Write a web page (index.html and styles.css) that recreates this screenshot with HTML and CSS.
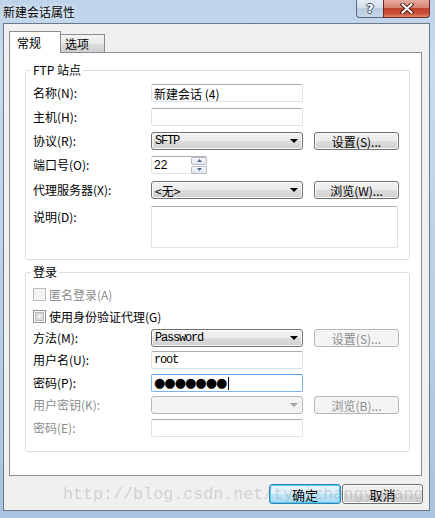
FILE: index.html
```html
<!DOCTYPE html>
<html lang="zh-CN">
  <head>
    <meta charset="utf-8">
    <title>新建会话属性</title>
    <link rel="stylesheet" href="styles.css">
  </head>
  <body>
    <div class="window">
      <div class="titlebar">
        <span class="title">新建会话属性</span>
        <div class="caption-buttons">
          <span class="cap-btn help">?</span>
          <span class="cap-btn close">
            <svg width="14" height="11" viewBox="0 0 14 11">
              <path d="M2.5 1.5 L11.5 9.5 M11.5 1.5 L2.5 9.5" stroke="#4b1f18" stroke-width="4" stroke-linecap="square" />
              <path d="M2.5 1.5 L11.5 9.5 M11.5 1.5 L2.5 9.5" stroke="#fff" stroke-width="2" stroke-linecap="square" />
            </svg>
          </span>
        </div>
      </div>

      <div class="client">
        <div class="tabs">
          <span class="tab active">常规</span>
          <span class="tab">选项</span>
        </div>

        <div class="panel">
          <fieldset class="group ftp">
            <legend>FTP 站点</legend>
            <div class="row">
              <label class="label">名称(N):</label>
              <span class="edit wide">新建会话 (4)</span>
            </div>
            <div class="row">
              <label class="label">主机(H):</label>
              <span class="edit wide"></span>
            </div>
            <div class="row">
              <label class="label">协议(R):</label>
              <span class="combo wide"><span class="mono">SFTP</span><span class="arrow"></span></span>
              <span class="button side">设置(S)...</span>
            </div>
            <div class="row">
              <label class="label">端口号(O):</label>
              <span class="edit port">
                <span class="num">22</span>
                <span class="spin">
                  <span class="spin-btn"><svg width="5" height="3" viewBox="0 0 5 3"><path d="M0 3 L2.5 0 L5 3 Z" fill="#4a6a96" /></svg></span>
                  <span class="spin-btn"><svg width="5" height="3" viewBox="0 0 5 3"><path d="M0 0 L2.5 3 L5 0 Z" fill="#4a6a96" /></svg></span>
                </span>
              </span>
            </div>
            <div class="row push">
              <label class="label">代理服务器(X):</label>
              <span class="combo wide"><span>&lt;无&gt;</span><span class="arrow"></span></span>
              <span class="button side">浏览(W)...</span>
            </div>
            <div class="row tall push">
              <label class="label">说明(D):</label>
              <span class="edit memo"></span>
            </div>
          </fieldset>

          <fieldset class="group login">
            <legend>登录</legend>
            <div class="row check disabled">
              <span class="box"></span>匿名登录(A)
            </div>
            <div class="row check">
              <span class="box"></span>使用身份验证代理(G)
            </div>
            <div class="row">
              <label class="label">方法(M):</label>
              <span class="combo wide"><span class="mono">Password</span><span class="arrow"></span></span>
              <span class="button side disabled">设置(S)...</span>
            </div>
            <div class="row">
              <label class="label">用户名(U):</label>
              <span class="edit wide"><span class="mono">root</span></span>
            </div>
            <div class="row push">
              <label class="label">密码(P):</label>
              <span class="edit wide focus"><span class="dots">●●●●●●●</span><span class="caret"></span></span>
            </div>
            <div class="row disabled">
              <label class="label">用户密钥(K):</label>
              <span class="combo wide disabled"><span></span><span class="arrow"></span></span>
              <span class="button side disabled">浏览(B)...</span>
            </div>
            <div class="row disabled push">
              <label class="label">密码(E):</label>
              <span class="edit wide"></span>
            </div>
          </fieldset>
        </div>

        <div class="footer">
          <span class="button default">确定</span>
          <span class="button cancel">取消</span>
        </div>

        <span class="watermark">http://blog.csdn.net/tyuizhangyuuang</span>
      </div>
    </div>
  </body>
</html>
```

FILE: styles.css
```css
* {
  box-sizing: border-box;
}
body {
  margin: 0;
  font-family: "Noto Sans CJK SC", "Liberation Sans", sans-serif;
  font-size: 12px;
  color: #000;
}

/* window frame */
.window {
  width: 435px;
  height: 518px;
  display: flex;
  flex-direction: column;
  padding: 0 5px 7px 3px;
  background: linear-gradient(to bottom, #bdd3ea 0, #c8dbef 60px, #b9d0e8 300px, #a9c3e0 100%);
}
.titlebar {
  height: 23px;
  display: flex;
  justify-content: space-between;
  align-items: flex-start;
}
.title {
  line-height: 23px;
  text-shadow: 0 0 6px #e6eef7, 0 0 3px #eef4fa;
}
.caption-buttons {
  display: flex;
  height: 18px;
}
.cap-btn {
  display: flex;
  align-items: center;
  justify-content: center;
  height: 18px;
  border: 1px solid #5d6b7c;
  border-top: none;
}
.cap-btn.help {
  width: 27px;
  border-right: none;
  border-radius: 0 0 0 4px;
  background: linear-gradient(#e3ebf4, #d2deeb 50%, #b9cbe0 50%, #c6d7ea);
  color: #fff;
  font: bold 13px "DejaVu Sans", sans-serif;
  text-shadow: 1px 0 #3c4b5d, -1px 0 #3c4b5d, 0 1px #3c4b5d, 0 -1px #3c4b5d;
}
.cap-btn.close {
  width: 47px;
  border-color: #6e2b22;
  border-radius: 0 0 4px 0;
  background: linear-gradient(#e7ab9c, #d98371 45%, #c3432c 50%, #ca503a 80%, #e18e72);
}

/* client area */
.client {
  position: relative;
  flex: 1;
  border: 1px solid #6b7888;
  background: #f0f0f0;
}
.tabs {
  display: flex;
  align-items: flex-end;
  height: 21px;
  margin: 7px 0 0 5px;
}
.tab {
  height: 18px;
  width: 44px;
  padding-left: 4px;
  line-height: 17px;
  border: 1px solid #898c95;
  border-left: none;
  border-bottom: none;
  background: linear-gradient(#f3f3f3, #ebebeb 50%, #dddddd 50%, #d0d0d0);
}
.tab.active {
  position: relative;
  z-index: 1;
  width: 52px;
  height: 22px;
  margin-bottom: -1px;
  padding-left: 7px;
  line-height: 21px;
  border-left: 1px solid #898c95;
  background: #fff;
}
.panel {
  width: 413px;
  height: 424px;
  margin-left: 5px;
  padding-left: 15px;
  border: 1px solid #898c95;
  background: #fff;
}

/* group boxes */
.group {
  width: 385px;
  margin: 10px 0 0;
  border: 1px solid #d5dfe5;
  border-radius: 3px;
  min-inline-size: 0;
}
.group legend {
  margin-left: -2px;
  padding: 0 2px;
  line-height: 14px;
}
.ftp {
  padding: 7px 7px 11px;
}
.login {
  margin-top: 5px;
  padding: 6px 7px 14px;
}
.row {
  display: flex;
  align-items: center;
  height: 18px;
}
.ftp .row + .row {
  margin-top: 6px;
}
.ftp .row.push {
  margin-top: 7px;
}
.login .row + .row {
  margin-top: 4px;
}
.login .row.push {
  margin-top: 5px;
}
.row.tall {
  height: 42px;
  align-items: flex-start;
}
.row.tall .label {
  padding-top: 2px;
}
.label {
  flex: none;
  width: 118px;
  line-height: 18px;
}
.row.disabled {
  color: #8d8d8d;
}

/* controls */
.edit {
  display: flex;
  align-items: center;
  height: 18px;
  padding-left: 2px;
  border: 1px solid #dde2e8;
  border-top-color: #abadb3;
  border-radius: 2px;
  background: #fff;
  white-space: pre;
}
.wide {
  width: 152px;
}
.memo {
  width: 247px;
  height: 42px;
}
.edit.focus {
  border-color: #7eb4ea;
  border-top-color: #569de5;
}
.dots {
  font-family: "DejaVu Sans", sans-serif;
  font-size: 13px;
  letter-spacing: -1px;
  line-height: 16px;
}
.caret {
  width: 1px;
  height: 13px;
  margin-left: 2px;
  background: #000;
}
.mono {
  font-family: "Liberation Mono", monospace;
  font-size: 12px;
  letter-spacing: -1.2px;
}
.port {
  width: 56px;
  padding-right: 0;
}
.num {
  flex: 1;
  font-family: "Liberation Sans", sans-serif;
}
.spin {
  display: flex;
  flex-direction: column;
  width: 16px;
  height: 17px;
  margin-right: -1px;
  gap: 1px;
}
.spin-btn {
  flex: 1;
  display: flex;
  align-items: center;
  justify-content: center;
  border: 1px solid #b6bcc6;
  border-radius: 2px;
  background: linear-gradient(#f6f7f9, #e3e6eb);
}
.combo {
  display: flex;
  align-items: center;
  justify-content: space-between;
  height: 18px;
  padding: 0 4px 0 3px;
  border: 1px solid #707070;
  border-radius: 3px;
  box-shadow: inset 0 0 0 1px #fbfbfb;
  background: linear-gradient(#f2f2f2, #ebebeb 50%, #dddddd 50%, #cfcfcf);
}
.arrow {
  width: 0;
  height: 0;
  border-left: 4px solid transparent;
  border-right: 4px solid transparent;
  border-top: 4px solid #000;
}
.combo.disabled {
  border-color: #b4b8bb;
  box-shadow: none;
  background: #f4f4f4;
}
.combo.disabled .arrow {
  border-top-color: #a3a3a3;
}
.button {
  display: flex;
  align-items: center;
  justify-content: center;
  height: 18px;
  border: 1px solid #707070;
  border-radius: 3px;
  box-shadow: inset 0 0 0 1px #fbfbfb;
  background: linear-gradient(#f2f2f2, #ebebeb 50%, #dddddd 50%, #cfcfcf);
}
.button.side {
  width: 85px;
  margin-left: 11px;
}
.button.disabled {
  color: #8d8d8d;
  border-color: #b4b8bb;
  box-shadow: none;
  background: #f4f4f4;
}

/* checkboxes */
.check {
  gap: 3px;
}
.box {
  width: 13px;
  height: 13px;
  border: 1px solid #8f8f8f;
  background: #f4f4f4;
  box-shadow: inset 0 0 0 1px #fff, inset 0 0 0 2px #b9b9b9, inset 0 0 0 4px #dcdcdc;
}
.check.disabled .box {
  border-color: #bcbcbc;
  box-shadow: none;
}

/* dialog buttons */
.footer {
  display: flex;
  justify-content: flex-end;
  gap: 1px;
  margin: 8px 6px 0 0;
}
.footer .button {
  height: 20px;
  font-size: 13px;
}
.button.default {
  width: 72px;
  border-color: #3c7fb1;
  box-shadow: inset 0 0 0 1px #48d0f8;
  background: linear-gradient(#e9f5fc, #d9effb 50%, #bfe5fb 50%, #a9daf6);
}
.button.cancel {
  width: 81px;
}
.watermark {
  position: absolute;
  left: 59px;
  top: 461px;
  font-family: "Liberation Mono", monospace;
  font-size: 16.7px;
  color: rgba(140, 140, 140, 0.32);
  white-space: nowrap;
}
```
